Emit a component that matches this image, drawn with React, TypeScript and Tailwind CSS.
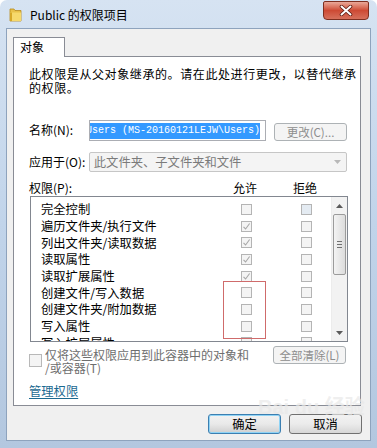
import React from "react";

const CJK = { fontFamily: '"Noto Sans CJK SC", "Noto Sans", sans-serif' };

function Check({ checked, tint }: { checked?: boolean; tint?: boolean }) {
  return (
    <div
      className={`w-[11px] h-[11px] border border-[#b4b4b4] flex items-center justify-center ${
        tint ? "bg-[#e4ebf2]" : "bg-[#f4f4f4]"
      }`}
    >
      {checked && (
        <svg width="9" height="9" viewBox="0 0 9 9">
          <path d="M1.5 4.8 L3.6 7 L7.6 1.5" fill="none" stroke="#a8a8a8" strokeWidth="1.1" />
        </svg>
      )}
    </div>
  );
}

const rows: [string, boolean][] = [
  ["完全控制", false],
  ["遍历文件夹/执行文件", true],
  ["列出文件夹/读取数据", true],
  ["读取属性", true],
  ["读取扩展属性", true],
  ["创建文件/写入数据", false],
  ["创建文件夹/附加数据", false],
  ["写入属性", false],
  ["写入扩展属性", false],
];

export default function App() {
  return (
    <div
      className="w-[377px] h-[448px] flex flex-col rounded-t-[7px] overflow-hidden bg-gradient-to-b from-[#d6e3f2] via-[#c1d4ea] to-[#b3c7df] relative text-black"
      style={CJK}
    >
      {/* title bar */}
      <div className="h-[28px] flex items-start shrink-0">
        <svg className="ml-[9px] mt-[7px]" width="13" height="15" viewBox="0 0 13 15">
          <path d="M1 2 L5 2 L6 3.5 L12 3.5 L12 14 L1 14 Z" fill="#e9c24a" stroke="#b88a1c" strokeWidth="0.8" />
          <path d="M1 5.5 L12 5.5 L12 14 L1 14 Z" fill="#f6d96c" />
          <rect x="1" y="5.5" width="2" height="8.5" fill="#d6a828" />
        </svg>
        <div className="ml-[8px] mt-[6px] text-[12px] leading-[18px]">Public 的权限项目</div>
        <div className="ml-auto mr-[8px] mt-[1px] w-[46px] h-[19px] rounded-b-[4px] rounded-t-[2px] border border-[#7e2f20] bg-gradient-to-b from-[#e9a898] via-[#cd4a34] to-[#d6705c] flex items-center justify-center">
          <svg width="14" height="11" viewBox="0 0 14 11">
            <path d="M2.5 1.5 L11.5 9.5 M11.5 1.5 L2.5 9.5" stroke="#5a1a10" strokeWidth="3.6" strokeLinecap="round" />
            <path d="M2.5 1.5 L11.5 9.5 M11.5 1.5 L2.5 9.5" stroke="#ffffff" strokeWidth="2" strokeLinecap="round" />
          </svg>
        </div>
      </div>

      {/* client */}
      <div className="flex-1 flex px-[6px] pb-[7px]">
        <div className="flex-1 flex flex-col bg-[#f0f0f0] border border-[#8ea3bd] pl-[6px] pt-[8px] pr-[7px]">
          {/* tab */}
          <div className="w-[52px] h-[20px] bg-white border border-b-0 border-[#898c95] text-[12px] leading-[18px] pl-[6px] relative z-10">
            对象
          </div>
          <div className="w-[348px] h-[350px] -mt-[1px] bg-white border border-[#898c95] flex flex-col pl-[15px] pr-[13px] pt-[10px]">
            <div className="text-[12px] leading-[14px] tracking-[0.6px] whitespace-nowrap">
              此权限是从父对象继承的。请在此处进行更改，以替代继承
              <br />
              的权限。
            </div>

            {/* name row */}
            <div className="flex items-start mt-[25px] h-[21px]">
              <div className="w-[60px] text-[12px] leading-[20px]">名称(N):</div>
              <div className="w-[177px] h-[21px] border border-[#abadb3] bg-white overflow-hidden flex items-center">
                <div
                  className="shrink-0 h-[16px] bg-[#3399ff] text-white text-[10px] leading-[16px] whitespace-nowrap -ml-[4px]"
                  style={{ fontFamily: '"Liberation Mono", monospace' }}
                >
                  Users (MS-20160121LEJW\Users)
                </div>
              </div>
              <div className="ml-[8px] mt-[3px] w-[73px] h-[18px] border border-[#adb2b5] rounded-[3px] bg-[#f4f4f4] text-[#8d8d8d] text-[11.5px] leading-[16px] text-center">
                更改(C)...
              </div>
            </div>

            {/* apply row */}
            <div className="flex items-start mt-[11px] h-[20px]">
              <div className="w-[60px] text-[12px] leading-[20px] whitespace-nowrap">应用于(O):</div>
              <div className="w-[259px] h-[20px] border border-[#c6c6c6] rounded-[2px] bg-[#f4f4f4] flex items-center pl-[4px] text-[12.3px] text-[#7b7b7b]">
                <span className="leading-[18px]">此文件夹、子文件夹和文件</span>
                <svg className="ml-auto mr-[5px]" width="7" height="4" viewBox="0 0 7 4">
                  <path d="M0 0 L7 0 L3.5 4 Z" fill="#b8b8b8" />
                </svg>
              </div>
            </div>

            {/* header */}
            <div className="flex mt-[9px] h-[14px] text-[12px] leading-[14px]">
              <div className="w-[204px]">权限(P):</div>
              <div className="w-[60px]">允许</div>
              <div>拒绝</div>
            </div>

            {/* list */}
            <div className="ml-[1px] mt-[1px] w-[318px] h-[146px] border border-[#828790] bg-white flex overflow-hidden">
              <div className="flex-1 pt-[4px] overflow-hidden">
                {rows.map(([label, chk], i) => (
                  <div key={i} className="h-[16.7px] flex items-center">
                    <div className="w-[210px] pl-[10px] text-[12.3px] leading-[16px] whitespace-nowrap">{label}</div>
                    <Check checked={chk} />
                    <div className="w-[49px]" />
                    <Check tint={i === 0} />
                  </div>
                ))}
              </div>
              <div className="w-[16px] bg-[#f2f2f2] border-l border-[#ececec] flex flex-col">
                <div className="h-[17px] flex items-center justify-center">
                  <svg width="7" height="4" viewBox="0 0 7 4">
                    <path d="M0 4 L7 4 L3.5 0 Z" fill="#5a5a5a" />
                  </svg>
                </div>
                <div className="mx-[1px] h-[61px] border border-[#9b9b9b] rounded-[2px] bg-gradient-to-r from-[#f3f3f3] to-[#dcdcdc] flex flex-col items-center justify-center gap-[2px]">
                  <div className="w-[5px] h-[1px] bg-[#707070]" />
                  <div className="w-[5px] h-[1px] bg-[#707070]" />
                  <div className="w-[5px] h-[1px] bg-[#707070]" />
                </div>
                <div className="flex-1" />
                <div className="h-[17px] flex items-center justify-center">
                  <svg width="7" height="4" viewBox="0 0 7 4">
                    <path d="M0 0 L7 0 L3.5 4 Z" fill="#5a5a5a" />
                  </svg>
                </div>
              </div>
            </div>

            {/* checkbox row */}
            <div className="flex items-start mt-[4px]">
              <div className="mt-[8px] w-[13px] h-[13px] border border-[#b8b8b8] bg-[#f4f4f4]" />
              <div className="ml-[3px] mt-[3px] w-[220px] text-[12px] leading-[12.5px] text-[#6e6e6e] whitespace-nowrap">
                仅将这些权限应用到此容器中的对象和
                <br />
                /或容器(T)
              </div>
              <div className="ml-[8px] w-[73px] h-[18px] border border-[#adb2b5] rounded-[3px] bg-[#f4f4f4] text-[#8d8d8d] text-[11.5px] leading-[16px] text-center">
                全部清除(L)
              </div>
            </div>

            <div className="mt-[10px] text-[12.3px] leading-[14px] text-[#1b6a91] underline underline-offset-2 w-fit">
              管理权限
            </div>
          </div>

          {/* buttons */}
          <div className="flex justify-end gap-[8px] mt-[8px] mr-[1px]">
            <div className="w-[73px] h-[20px] rounded-[3px] border border-[#3c7fb1] bg-gradient-to-b from-[#f2f2f2] via-[#e9e9e9] to-[#cfcfcf] shadow-[inset_0_0_0_1px_#8fd3f5] text-[12.3px] leading-[18px] text-center">
              确定
            </div>
            <div className="w-[73px] h-[20px] rounded-[3px] border border-[#707070] bg-gradient-to-b from-[#f2f2f2] via-[#ebebeb] to-[#d6d6d6] text-[12.3px] leading-[18px] text-center">
              取消
            </div>
          </div>
        </div>
      </div>

      {/* red highlight rectangle */}
      <div className="absolute left-[223px] top-[281px] w-[43px] h-[58px] border border-[#cf6b6b] pointer-events-none" />

      {/* watermark */}
      <div
        className="absolute left-[258px] top-[396px] text-[20px] font-bold text-[#e8e8e8]/70 pointer-events-none leading-[22px]"
        style={{ fontFamily: '"Liberation Sans", "Noto Sans CJK SC", sans-serif' }}
      >
        Bai du 经验
      </div>
    </div>
  );
}
